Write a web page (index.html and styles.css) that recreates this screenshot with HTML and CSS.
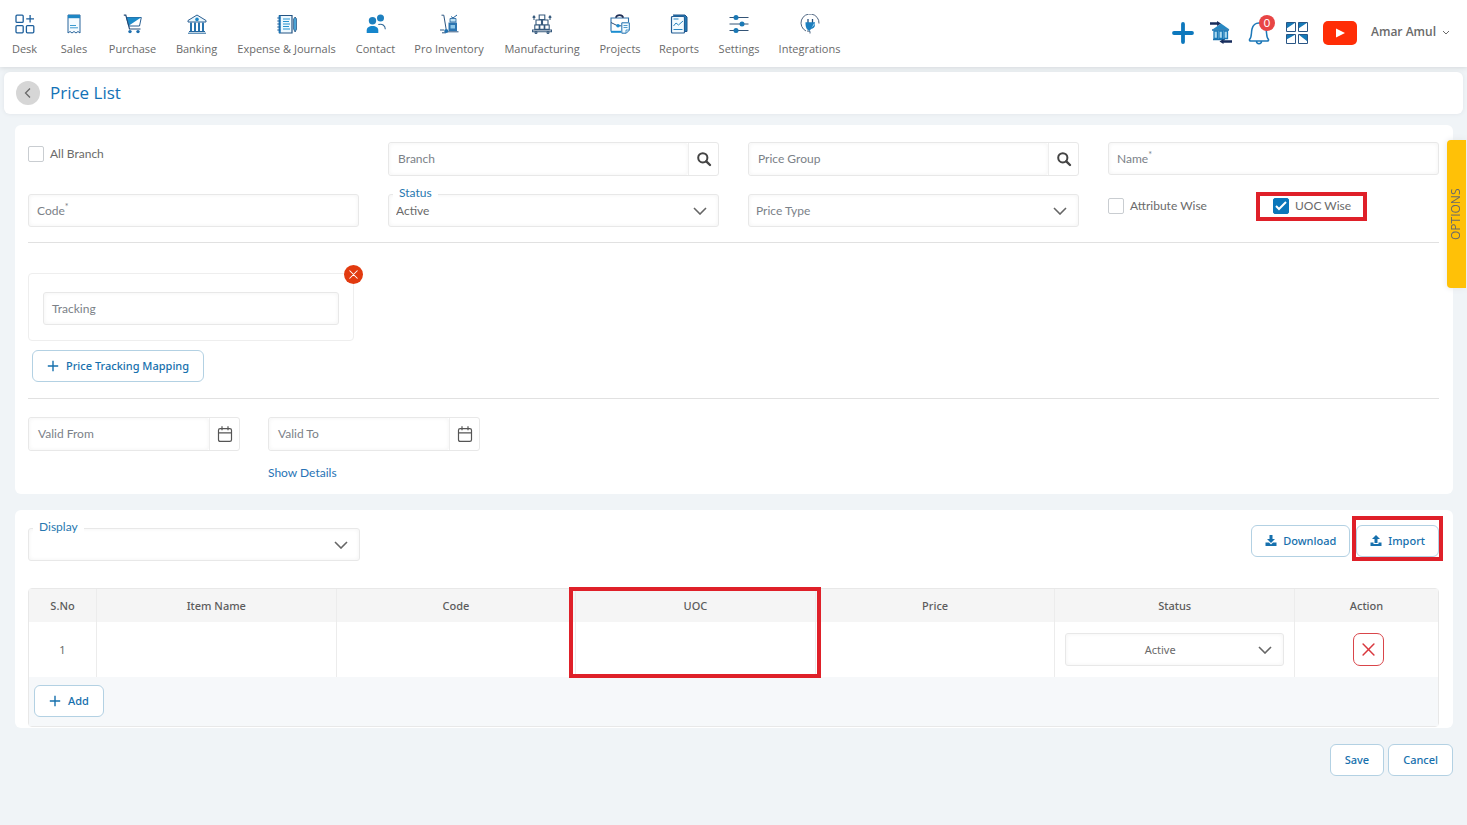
FILE: index.html
```html
<!DOCTYPE html>
<html lang="en">
<head>
<meta charset="utf-8">
<meta name="viewport" content="width=device-width, initial-scale=1">
<title>Price List</title>
<link rel="stylesheet" href="styles.css">
</head>
<body>
<svg class="defs" aria-hidden="true">
  <symbol id="search" viewBox="0 0 16 16"><circle cx="6.8" cy="6.8" r="4.6" fill="none" stroke="#444" stroke-width="2"/><path d="M10.3 10.3L14 14" stroke="#444" stroke-width="2.4" stroke-linecap="round"/></symbol>
  <symbol id="calendar" viewBox="0 0 16 16"><path d="M3.2 2.600h9.6q1.700 0 1.700 1.700v9.400q0 1.700-1.700 1.700H3.200q-1.700 0-1.700-1.700V4.300Q1.500 2.600 3.200 2.600zM1.500 6.800h13M5 .2v4M11 .2v4" fill="none" stroke="#555" stroke-width="1.200"/></symbol>
  <symbol id="plus" viewBox="0 0 12 12"><path d="M6 .8v10.400M.8 6h10.400" stroke="currentColor" stroke-width="1.400"/></symbol>
  <symbol id="cross" viewBox="0 0 12 12"><path d="M1 1l10 10M11 1L1 11" stroke="currentColor" stroke-width="1.400" stroke-linecap="round"/></symbol>
</svg>

<header class="topbar">
  <nav class="nav" aria-label="Main">
    <a href="#"><svg viewBox="0 0 20 20" fill="none" stroke="#1d5f9c" stroke-width="1.300"><rect x="1" y="1.200" width="7.200" height="7.200" rx="1"/><rect x="1" y="11.600" width="7.200" height="7.200" rx="1"/><rect x="11.400" y="11.600" width="7.400" height="7.200" rx="1"/><path d="M15.100 1v7.600M11.200 4.800h7.800"/></svg>Desk</a>
    <a href="#"><svg viewBox="0 0 20 20"><path d="M4 1h12v18l-2-1.500-2 1.500-2-1.500L8 19l-2-1.500L4 19z" fill="#f5fbff" stroke="#28649b"/><path d="M4 1h12v3.200H4z" fill="#1e86c4"/><path d="M6 11.500h6M6 13.800h8" stroke="#3c9bd0"/></svg>Sales</a>
    <a href="#"><svg viewBox="0 0 20 20"><path d="M3.500 3.500h14.800L16.500 12H5.800z" fill="#fff" stroke="#2b5f92"/><path d="M3.700 3.500H18L6 11.500z" fill="#1d8bc9"/><path d="M.8 1.200h2L6.500 15h11" fill="none" stroke="#234a77" stroke-width="1.200"/><circle cx="7" cy="17.600" r="1.700" fill="#1f6fae"/><circle cx="15" cy="17.600" r="1.700" fill="#1f6fae"/></svg>Purchase</a>
    <a href="#"><svg viewBox="0 0 20 20"><path d="M1 8V6.500L10 1l9 5.500V8z" fill="#eaf6fc" stroke="#2b5f92"/><circle cx="10" cy="5.400" r="1.800" fill="#1b87c7"/><path d="M4 8.500V17M8 8.500V17M12 8.500V17M16 8.500V17" stroke="#2773ae" stroke-width="2"/><path d="M2 17.500h16M1 19.200h18" stroke="#24679f"/></svg>Banking</a>
    <a href="#"><svg viewBox="0 0 20 20"><path d="M2.500 1.500h12.500v17.500H2.500z" fill="#eef9ff" stroke="#245483" stroke-width="1.200"/><path d="M2.700 1.500v17.500" stroke="#1d78b8" stroke-width="2"/><path d="M.3 4h3M.3 7h3M.3 10h3M.3 13h3M.3 16h3" stroke="#1d5f9c"/><path d="M6 5h7M6 7.500h6M6 10h7M6 12.500h6M6 15h7" stroke="#2a94cf"/><path d="M16.600 5l1.500-2 1.500 2v10l-1.500 3-1.500-3z" fill="#4ca6d8" stroke="#245483" stroke-width=".8"/></svg>Expense &amp; Journals</a>
    <a href="#"><svg viewBox="0 0 20 20"><circle cx="14.500" cy="4" r="3.500" fill="#1e80bf"/><circle cx="6.500" cy="6.800" r="3.700" fill="#1e80bf"/><path d="M.7 19v-2.500C.7 13.500 3 12 6.500 12s5.800 1.500 5.800 4.500V19z" fill="#1686cc"/><path d="M12.300 10.600c3.700-1.300 7 .7 7 4.600" fill="none" stroke="#316998" stroke-width="1.100"/></svg>Contact</a>
    <a href="#"><svg viewBox="0 0 20 20"><path d="M2.500 1.200h2.300L7.200 15.500M1 16h4M8 17.800h11.500M3 18.800h4" fill="none" stroke="#2b5682"/><circle cx="7.200" cy="17" r="2" fill="#1f6fae"/><path d="M9.500 8.500h8.500v8.500H9.500z" fill="#2b74b0"/><path d="M11.500 11h4.500v3.500h-4.500z" fill="#8dc7e8"/><path d="M11 4.500h6v3.500h-6z" fill="#bfe2f4" stroke="#1d5f9c" stroke-width=".8"/><path d="M12 2.500l2 1.500 4-3" fill="none" stroke="#1d5f9c"/></svg>Pro Inventory</a>
    <a href="#"><svg viewBox="0 0 20 20" fill="none" stroke="#36597c" stroke-width="1.100"><path d="M7.200 1h5.600v4.500H7.200zM4 6h5.500v4.700H4zM10.500 6H16v4.700h-5.500zM2.800 11h4.400v4.300H2.800zM7.800 11h4.400v4.300H7.800zM12.800 11h4.400v4.300h-4.400zM.5 16h19v1.800H.5z"/><path d="M2 2v4M.7 3.700L2 2l1.300 1.700M18 2v4M16.700 3.700L18 2l1.300 1.700"/><circle cx="4" cy="18.500" r="1"/><circle cx="16" cy="18.500" r="1"/></svg>Manufacturing</a>
    <a href="#"><svg viewBox="0 0 20 20"><path d="M1 17.500V4h17.500v4" fill="none" stroke="#2b6ea8" stroke-width="1.100"/><path d="M6 3.800C6 .2 13 .2 13 3.800" fill="none" stroke="#202e54" stroke-width="1.800"/><path d="M1 8.500l6.500 3.300h4" fill="none" stroke="#2d4e78"/><circle cx="8" cy="11.800" r="1.800" fill="#1e8bcd"/><path d="M1 17.800h10" stroke="#1b8dd0" stroke-width="2"/><path d="M11.800 8.800h7.500v7.400l-3 3h-4.500z" fill="#f1faff" stroke="#1f6fae"/><path d="M13.500 11.500h4M13.500 13.500h4M16 19v-3h3" fill="none" stroke="#2a82bc" stroke-width=".8"/></svg>Projects</a>
    <a href="#"><svg viewBox="0 0 20 20"><path d="M4 1h12l2 2v14.500H16" fill="#227eb9" stroke="#1d5289"/><rect x="2.500" y="2.500" width="13" height="16.500" rx="1" fill="#f3fbff" stroke="#235d94" stroke-width="1.200"/><path d="M4.500 12l2.500-3 2.500 2 4.500-4M4.500 15.500h9M4.500 5h5" fill="none" stroke="#2985c0"/></svg>Reports</a>
    <a href="#"><svg viewBox="0 0 20 20"><path d="M.5 3.500h19M.5 10h19M.5 16.500h19" stroke="#345476"/><circle cx="7" cy="3.500" r="2.500" fill="#1a78b5"/><circle cx="13" cy="10" r="2.500" fill="#1a78b5"/><circle cx="7" cy="16.500" r="2.500" fill="#1a78b5"/></svg>Settings</a>
    <a href="#"><svg viewBox="0 0 20 20"><path d="M6 17A9 9 0 1 1 19 9.500M7 17l3 .3v2.200" fill="none" stroke="#4f6682"/><path d="M8 5v4M12.500 5v4" stroke="#244d79" stroke-width="1.300"/><path d="M5.500 8.300h9.500v2.200c0 3-1.800 4.200-4 4.500L9.500 17C6 15.500 5.500 12.500 5.500 8.300z" fill="#1c7fbf"/><path d="M14.500 8.500v2.200l-3 3z" fill="#b8e0f5"/></svg>Integrations</a>
  </nav>
  <div class="tools">
    <button type="button" aria-label="New"><svg class="tool" viewBox="0 0 24 24"><path d="M12 3v18M3 12h18" stroke="#0d78bd" stroke-width="3.800" stroke-linecap="round"/></svg></button>
    <button type="button" aria-label="Bank transfer"><svg class="tool" viewBox="0 0 24 24"><path d="M3.500 8.500L12 2.500l8.500 6z" fill="#2788c2"/><path d="M3 9h17M4 18.500h12" stroke="#1a6fab" stroke-width="1.500"/><path d="M5 10h3.500v7.500H5zM10 10h3.500v7.500H10zM15 10h3.500v7.500H15z" fill="#a9d8ef" stroke="#1a7ab8" stroke-width="1.300"/><path d="M1 2.500h7M14 20.500h9" stroke="#172c5c" stroke-width="2.400"/><path d="M8 0l4 2.500L8 5zM14.500 18l-4 2.500 4 2.500z" fill="#172c5c"/></svg></button>
    <button type="button" class="bell" aria-label="Notifications"><svg class="tool" viewBox="0 0 24 24"><path d="M4 20q-2 0-1.500-1.500C5 16 4 12 5 8c1-4 3.500-6 7-6s6 2 7 6 0 8 2.500 10.500Q22 20 20 20zM9.500 20.300c0 3.200 5 3.200 5 0" fill="none" stroke="#1d78b8" stroke-width="1.500"/></svg><span class="count">0</span></button>
    <button type="button" aria-label="Apps"><svg class="tool" viewBox="0 0 24 24"><path d="M1.500 1.500h9v9h-9zM13.500 1.500h9v9h-9zM1.500 13.500h9v9h-9zM13.500 13.500h9v9h-9z" fill="#fff"/><path d="M1.500 1.500h9l-9 6zM13.500 1.500h9l-9 6zM1.500 13.500h9l-9 5zM13.500 13.500h9v7z" fill="#167ab8"/><path d="M1.500 1.500h9v9h-9zM13.500 1.500h9v9h-9zM1.500 13.500h9v9h-9zM13.500 13.500h9v9h-9z" fill="none" stroke="#2a5685"/></svg></button>
    <button type="button" aria-label="Video tutorials"><svg class="video" viewBox="0 0 34 24"><rect width="34" height="24" rx="5" fill="#ff2d06"/><path d="M13 7.500v9l9-4.500z" fill="#fff"/></svg></button>
    <button type="button" class="user">Amar Amul <svg viewBox="0 0 8 8"><path d="M1 3l3 3 3-3" fill="none" stroke="currentColor"/></svg></button>
  </div>
</header>

<section class="titlebar">
  <button type="button" class="back" aria-label="Back"><svg viewBox="0 0 12 12"><path d="M8 1.500L3.500 6 8 10.500" fill="none" stroke="currentColor" stroke-width="1.300"/></svg></button>
  <h1>Price List</h1>
</section>

<main>
  <section class="card details">
    <div class="grid">
      <label class="check"><input type="checkbox">All Branch</label>
      <div class="group"><div class="field"><input id="branch" type="text"><label for="branch">Branch</label></div><button type="button" aria-label="Search branch"><svg><use href="#search"/></svg></button></div>
      <div class="group"><div class="field"><input id="pgroup" type="text"><label for="pgroup">Price Group</label></div><button type="button" aria-label="Search price group"><svg><use href="#search"/></svg></button></div>
      <div class="field"><input id="name" type="text"><label for="name">Name<sup>*</sup></label></div>
      <div class="field"><input id="code" type="text"><label for="code">Code<sup>*</sup></label></div>
      <div class="floating"><label for="status">Status</label><select id="status"><option>Active</option><option>Inactive</option></select></div>
      <select class="hint" aria-label="Price Type"><option>Price Type</option></select>
      <div class="checks">
        <label class="check"><input type="checkbox">Attribute Wise</label>
        <label class="check marked"><input type="checkbox" checked>UOC Wise</label>
      </div>
    </div>
    <hr>
    <div class="tracking">
      <button type="button" class="remove" aria-label="Remove tracking"><svg><use href="#cross"/></svg></button>
      <div class="field"><input id="tracking" type="text"><label for="tracking">Tracking</label></div>
    </div>
    <button type="button" class="btn mapping"><svg><use href="#plus"/></svg>Price Tracking Mapping</button>
    <hr>
    <div class="dates">
      <div class="group"><div class="field"><input id="from" type="text"><label for="from">Valid From</label></div><button type="button" aria-label="Pick start date"><svg><use href="#calendar"/></svg></button></div>
      <div class="group"><div class="field"><input id="to" type="text"><label for="to">Valid To</label></div><button type="button" aria-label="Pick end date"><svg><use href="#calendar"/></svg></button></div>
      <a class="show" href="#">Show Details</a>
    </div>
  </section>

  <section class="card items">
    <div class="bar">
      <div class="floating"><label for="display">Display</label><select id="display"><option></option></select></div>
      <div class="actions">
        <button type="button" class="btn"><svg viewBox="0 0 12 12"><path d="M4.500 0h3v4H10L6 8 2 4h2.500zM.5 7.500H4l2 2 2-2h3.500v3.500H.5z" fill="currentColor"/></svg>Download</button>
        <span class="import"><button type="button" class="btn"><svg viewBox="0 0 12 12"><path d="M4.500 8h3V4H10L6 0 2 4h2.500zM.5 7.500H3.500V9h5V7.500h3v3.500H.5z" fill="currentColor"/></svg>Import</button></span>
      </div>
    </div>
    <table>
      <thead><tr><th class="no">S.No</th><th>Item Name</th><th>Code</th><th class="uoc">UOC</th><th>Price</th><th>Status</th><th class="act">Action</th></tr></thead>
      <tbody><tr><td>1</td><td></td><td></td><td></td><td></td><td class="pick"><select aria-label="Item status"><option>Active</option><option>Inactive</option></select></td><td class="drop"><button type="button" class="delete" aria-label="Delete row"><svg><use href="#cross"/></svg></button></td></tr></tbody>
      <tfoot><tr><td colspan="7"><button type="button" class="btn"><svg><use href="#plus"/></svg>Add</button></td></tr></tfoot>
    </table>
  </section>

  <div class="footer">
    <button type="button" class="btn">Save</button>
    <button type="button" class="btn">Cancel</button>
  </div>
</main>
<button type="button" class="options">OPTIONS</button>
</body>
</html>
```
FILE: styles.css
```css
* { box-sizing: border-box; }
body {
  margin: 0;
  background: #f0f4f7;
  color: #6a6a6a;
  font: 12px/16px Lato, "Open Sans", sans-serif;
}
button, input, select { font: inherit; color: inherit; margin: 0; }
button { cursor: pointer; padding: 0; border: 0; background: none; }
a { text-decoration: none; color: inherit; }
.defs { position: absolute; width: 0; height: 0; }

/* Header */
.topbar {
  display: flex;
  justify-content: space-between;
  height: 67px;
  background: #fff;
  box-shadow: 0 1px 5px #d4d8da;
}
.nav {
  display: grid;
  grid-template-columns: 49px 50px 67px 61px 119px 59px 88px 98px 58px 60px 60px 81px;
  font-family: "Open Sans", sans-serif;
  font-size: 11px;
}
.nav a {
  display: flex;
  flex-direction: column;
  align-items: center;
  gap: 7px;
  padding-top: 14px;
  white-space: nowrap;
}
.nav svg { width: 20px; height: 20px; }
.tools { display: flex; align-items: center; gap: 14px; padding: 0 17px 2px 0; }
.tools button { display: flex; }
.tool { width: 24px; height: 24px; }
.video { width: 34px; height: 24px; }
.bell { position: relative; }
.count {
  position: absolute;
  top: -6px;
  right: -4px;
  width: 16px;
  border-radius: 8px;
  background: #e84545;
  color: #fff;
  font-size: 11px;
  text-align: center;
}
.tools .user {
  align-items: center;
  gap: 6px;
  padding-bottom: 2px;
  font: 600 12px/16px "Open Sans", sans-serif;
}
.user svg { width: 8px; height: 8px; }

.titlebar {
  display: flex;
  align-items: center;
  gap: 10px;
  height: 42px;
  margin: 5px 4px 11px;
  padding: 0 12px;
  border-radius: 6px;
  background: #fff;
  box-shadow: 0 0 4px #dfe4e8;
}
.back {
  display: grid;
  place-items: center;
  width: 24px;
  height: 24px;
  border-radius: 50%;
  background: #d6d6d6;
}
.back svg { width: 12px; height: 12px; }
h1 { margin: 0; color: #1272b6; font: 400 17px/24px "Open Sans", sans-serif; }

/* Cards */
main { padding: 0 14px 0 15px; }
.card { padding: 17px 14px 0 13px; border-radius: 6px; background: #fff; }
.details { margin-bottom: 16px; padding-bottom: 13px; }
.grid { display: grid; grid-template-columns: repeat(4, 1fr); gap: 18px 29px; }
hr { margin: 15px 0 0; border: 0; border-top: 1px solid #e1e1e1; }

/* Form controls */
.field { display: grid; flex: 1; }
.field > * { grid-area: 1 / 1; }
.field label { align-self: center; padding-left: 9px; color: #7b8188; pointer-events: none; }
sup { font-size: 9px; line-height: 0; }
input[type="text"], select {
  width: 100%;
  height: 33px;
  padding: 0 7px;
  border: 1px solid #e8e8e8;
  border-radius: 3px;
  background: #fff;
  box-shadow: inset 0 0 4px #f2f2f2;
}
select {
  appearance: none;
  padding-right: 36px;
  background: #fff url("data:image/svg+xml,%3Csvg xmlns='http://www.w3.org/2000/svg' width='14' height='8' fill='none' stroke='%23666' stroke-width='1.6'%3E%3Cpath d='M1 1l6 6 6-6'/%3E%3C/svg%3E") no-repeat right 11px center;
}
.hint { color: #7b8188; }
.group { display: flex; border: 1px solid #e8e8e8; border-radius: 3px; overflow: hidden; }
.group input[type="text"] { height: 32px; border: 0; }
.group button {
  display: grid;
  place-items: center;
  width: 30px;
  border-left: 1px solid #eee;
}
.group svg { width: 16px; height: 16px; }
.floating { position: relative; }
.floating label {
  position: absolute;
  top: -9px;
  left: 5px;
  padding: 0 6px;
  background: #fff;
  color: #2878b0;
}
.check { display: flex; align-items: center; align-self: start; gap: 6px; padding-top: 4px; }
.check input {
  appearance: none;
  width: 16px;
  height: 16px;
  border: 1px solid #c9cdd1;
  border-radius: 2px;
  background: #fff;
}
.check input:checked {
  border-color: #0b76ba;
  background: #0b76ba url("data:image/svg+xml,%3Csvg xmlns='http://www.w3.org/2000/svg' width='12' height='10' fill='none' stroke='white' stroke-width='2'%3E%3Cpath d='M1 5l3 3 7-7'/%3E%3C/svg%3E") no-repeat center;
}
.checks { display: grid; grid-template-columns: 148px max-content; align-items: start; }
.marked { margin-top: -2px; padding: 2px 12px 3px 13px; border: 4px solid #df2029; }

.tracking {
  position: relative;
  width: 326px;
  margin-top: 30px;
  padding: 18px 14px 15px;
  border: 1px solid #eee;
  border-radius: 4px;
}
.remove {
  position: absolute;
  top: -9px;
  right: -10px;
  display: grid;
  place-items: center;
  width: 19px;
  height: 19px;
  border-radius: 50%;
  background: #e23a0f;
  color: #fff;
}
.remove svg { width: 9px; height: 9px; }
.btn {
  display: inline-flex;
  align-items: center;
  justify-content: center;
  gap: 7px;
  height: 32px;
  padding: 0 14px;
  border: 1px solid #b3d1e3;
  border-radius: 6px;
  background: #fff;
  color: #1670ad;
  font: 500 11px/16px "Noto Sans", sans-serif;
}
.btn svg { width: 12px; height: 12px; }
.mapping { margin: 9px 0 1px 4px; }
.dates {
  display: grid;
  grid-template-columns: 212px 212px;
  gap: 14px 28px;
  margin-top: 18px;
}
.show { grid-column: 2; color: #2873b5; }

/* Items */
.items { padding-top: 15px; padding-bottom: 1px; }
.bar { display: flex; justify-content: space-between; align-items: flex-start; margin-bottom: 27px; }
.bar .floating { width: 332px; margin-top: 3px; }
.actions { display: flex; gap: 6px; }
.actions .btn { gap: 6px; padding: 0 13px; }
.import { position: relative; }
.import::after, .uoc::after { content: ""; position: absolute; border: 4px solid #df2029; pointer-events: none; }
.import::after { inset: -9px -4px -4px; }
table {
  width: 100%;
  table-layout: fixed;
  border: 1px solid #e8e8e8;
  border-radius: 4px;
  border-spacing: 0;
  font-family: "Noto Sans", sans-serif;
  font-size: 11px;
  text-align: center;
}
th { height: 33px; padding: 0; background: #f5f5f5; font-weight: 500; color: #5c5c5c; }
td { height: 55px; padding: 0; }
th + th, td + td { border-left: 1px solid #ececec; }
.no { width: 67px; }
.act { width: 144px; }
.uoc { position: relative; }
.uoc::after { inset: -2px -6px -56px -7px; }
.pick { padding: 0 10px; }
.pick select { text-align: center; text-align-last: center; }
.drop { padding-left: 3px; }
.delete {
  display: inline-grid;
  place-items: center;
  width: 31px;
  height: 33px;
  border: 1px solid #d9454a;
  border-radius: 7px;
  color: #d9383e;
  vertical-align: middle;
}
.delete svg { width: 13px; height: 13px; }
tfoot td { height: 49px; padding: 0 5px 1px; background: #f6f8fa; text-align: left; }
.footer { display: flex; justify-content: flex-end; gap: 4px; margin-top: 16px; }

.options {
  position: fixed;
  top: 140px;
  right: 1px;
  width: 19px;
  height: 148px;
  border-radius: 0 4px 4px 0;
  background: #ffc107;
  box-shadow: 0 0 6px #e2e5e8;
  writing-mode: vertical-rl;
  transform: rotate(180deg);
  font-family: "Open Sans", sans-serif;
}
```
